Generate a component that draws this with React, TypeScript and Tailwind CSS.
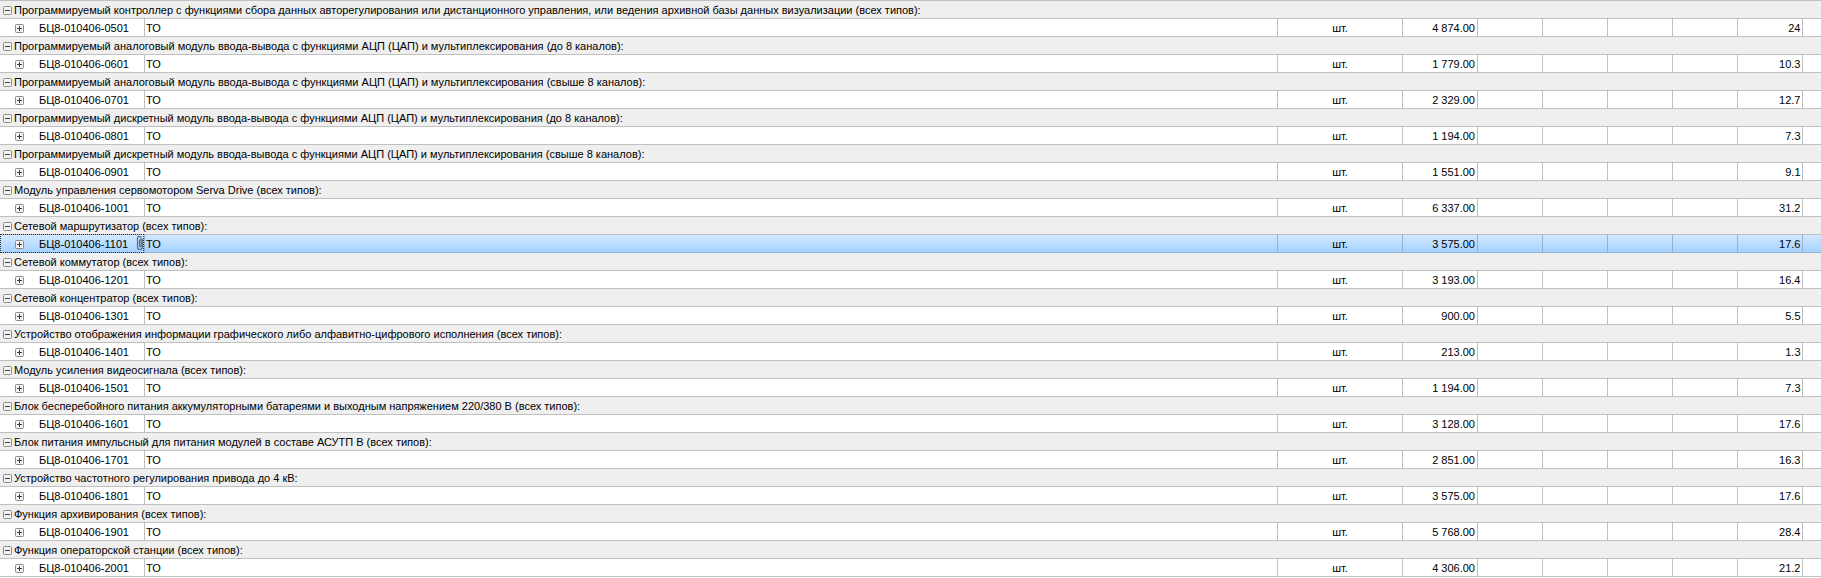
import React from "react";

type Item = {
  title: string;
  code: string;
  price: string;
  hours: string;
};

const items: Item[] = [
  { title: "Программируемый контроллер с функциями сбора данных авторегулирования или дистанционного управления, или ведения архивной базы данных визуализации (всех типов):", code: "БЦ8-010406-0501", price: "4 874.00", hours: "24" },
  { title: "Программируемый аналоговый модуль ввода-вывода с функциями АЦП (ЦАП) и мультиплексирования (до 8 каналов):", code: "БЦ8-010406-0601", price: "1 779.00", hours: "10.3" },
  { title: "Программируемый аналоговый модуль ввода-вывода с функциями АЦП (ЦАП) и мультиплексирования (свыше 8 каналов):", code: "БЦ8-010406-0701", price: "2 329.00", hours: "12.7" },
  { title: "Программируемый дискретный модуль ввода-вывода с функциями АЦП (ЦАП) и мультиплексирования (до 8 каналов):", code: "БЦ8-010406-0801", price: "1 194.00", hours: "7.3" },
  { title: "Программируемый дискретный модуль ввода-вывода с функциями АЦП (ЦАП) и мультиплексирования (свыше 8 каналов):", code: "БЦ8-010406-0901", price: "1 551.00", hours: "9.1" },
  { title: "Модуль управления сервомотором Serva Drive (всех типов):", code: "БЦ8-010406-1001", price: "6 337.00", hours: "31.2" },
  { title: "Сетевой маршрутизатор (всех типов):", code: "БЦ8-010406-1101", price: "3 575.00", hours: "17.6" },
  { title: "Сетевой коммутатор (всех типов):", code: "БЦ8-010406-1201", price: "3 193.00", hours: "16.4" },
  { title: "Сетевой концентратор (всех типов):", code: "БЦ8-010406-1301", price: "900.00", hours: "5.5" },
  { title: "Устройство отображения информации графического либо алфавитно-цифрового исполнения (всех типов):", code: "БЦ8-010406-1401", price: "213.00", hours: "1.3" },
  { title: "Модуль усиления видеосигнала (всех типов):", code: "БЦ8-010406-1501", price: "1 194.00", hours: "7.3" },
  { title: "Блок бесперебойного питания аккумуляторными батареями и выходным напряжением 220/380 В (всех типов):", code: "БЦ8-010406-1601", price: "3 128.00", hours: "17.6" },
  { title: "Блок питания импульсный для питания модулей в составе АСУТП В (всех типов):", code: "БЦ8-010406-1701", price: "2 851.00", hours: "16.3" },
  { title: "Устройство частотного регулирования привода до 4 кВ:", code: "БЦ8-010406-1801", price: "3 575.00", hours: "17.6" },
  { title: "Функция архивирования (всех типов):", code: "БЦ8-010406-1901", price: "5 768.00", hours: "28.4" },
  { title: "Функция операторской станции (всех типов):", code: "БЦ8-010406-2001", price: "4 306.00", hours: "21.2" },
];

// small tree toggle, minus for groups, plus for rows
function TreeBox({ open }: { open?: boolean }) {
  return (
    <svg width="9" height="9" viewBox="0 0 9 9" className="shrink-0">
      <rect x="0.5" y="0.5" width="8" height="8" rx="1" fill="#f4f4f4" stroke="#8a8a8a" />
      <path d="M2 4.5h5" stroke="#3f3f3f" />
      {!open && <path d="M4.5 2v5" stroke="#3f3f3f" />}
    </svg>
  );
}

function Clip() {
  return (
    <svg width="8" height="16" viewBox="0 0 8 16" className="absolute right-0 top-0" fill="none">
      <path
        d="M6.5 4v8a2.5 2.5 0 0 1-5 0V3.2a1.8 1.8 0 0 1 3.6 0V11a.8.8 0 0 1-1.6 0V4.5"
        stroke="#5a6c80"
        strokeWidth="1.2"
      />
    </svg>
  );
}

function ItemRow({ item, selected }: { item: Item; selected: boolean }) {
  const line = selected ? "border-[#8fb4d8]" : "border-[#c0c0c0]";
  return (
    <div
      className={`grid h-[18px] grid-cols-[145px_1133px_125px_75px_65px_65px_65px_65px_65px_1fr] border-b ${line} ${
        selected ? "bg-gradient-to-b from-[#d3e9ff] to-[#a6d2ff]" : "bg-white"
      }`}
    >
      <div className={`relative flex items-center border-r pl-[15px] pt-px ${line}`}>
        <TreeBox />
        <span className="ml-[15px]">{item.code}</span>
        {selected && <Clip />}
        {selected && (
          <div className="pointer-events-none absolute inset-x-0 top-[-1px] bottom-[-1px] border border-dotted border-[#333]" />
        )}
      </div>
      <div className={`flex items-center border-r pl-px pt-px ${line}`}>ТО</div>
      <div className={`flex items-center justify-center border-r pt-px ${line}`}>шт.</div>
      <div className={`flex items-center justify-end border-r pr-[2px] pt-px ${line}`}>{item.price}</div>
      <div className={`border-r ${line}`} />
      <div className={`border-r ${line}`} />
      <div className={`border-r ${line}`} />
      <div className={`border-r ${line}`} />
      <div className={`flex items-center justify-end border-r pr-[1.5px] pt-px ${line}`}>{item.hours}</div>
      <div />
    </div>
  );
}

export default function App() {
  return (
    <div className="h-[578px] w-[1821px] overflow-hidden border-t border-[#c0c0c0] bg-white font-['Liberation_Sans',sans-serif] text-[11px] leading-none text-black">
      {items.map((item, i) => (
        <div key={item.code}>
          <div className="flex h-[18px] items-center gap-[2px] border-b border-[#c0c0c0] bg-[#efefef] pl-[3px] pt-px">
            <TreeBox open />
            <span className="whitespace-nowrap">{item.title}</span>
          </div>
          <ItemRow item={item} selected={i === 6} />
        </div>
      ))}
    </div>
  );
}
